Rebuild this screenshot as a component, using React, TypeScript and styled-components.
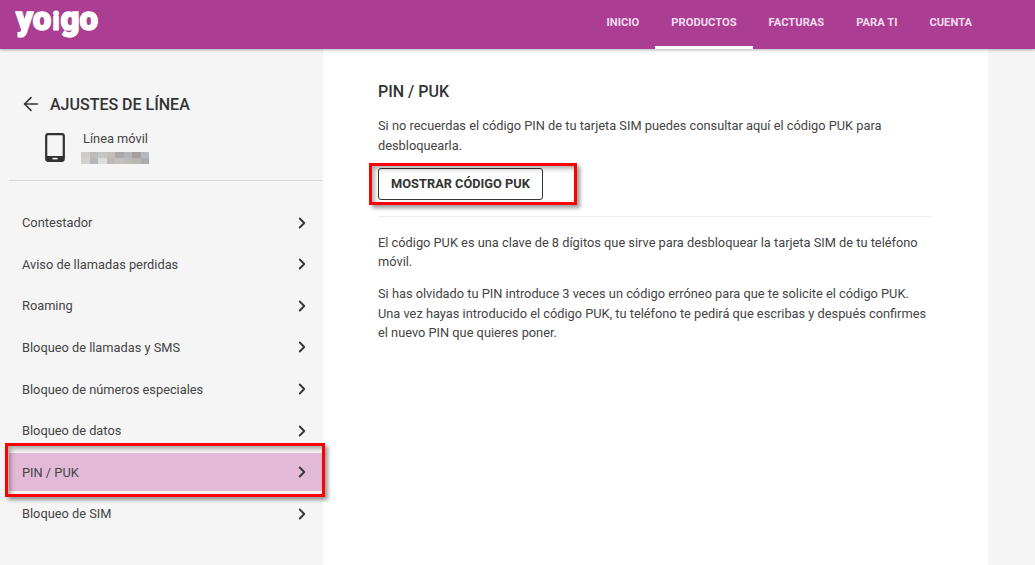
import React from "react";
import styled, { createGlobalStyle } from "styled-components";
import { ArrowLeft, ChevronRight } from "lucide-react";

const navItems = ["INICIO", "PRODUCTOS", "FACTURAS", "PARA TI", "CUENTA"];

const menuItems = [
  "Contestador",
  "Aviso de llamadas perdidas",
  "Roaming",
  "Bloqueo de llamadas y SMS",
  "Bloqueo de números especiales",
  "Bloqueo de datos",
  "PIN / PUK",
  "Bloqueo de SIM",
];

const mosaic = [
  "#cfcbc7", "#bcbcbc", "#c6c6c6", "#c2c0bc", "#a9a7a7", "#b3b5b8", "#a39f9c", "#b7babc",
  "#d2d0cc", "#b5b8ba", "#dcdedb", "#bdb9b6", "#c2c0be", "#bebcb9", "#b9b5b0", "#a9adb1",
];

const GlobalStyle = createGlobalStyle`
  html, body {
    margin: 0;
    height: 100%;
    overflow: hidden;
    background: #f5f5f5;
    font-family: Roboto, "Liberation Sans", sans-serif;
    color: #333;
  }
`;

function App() {
  return (
    <Page>
      <GlobalStyle />
      <Header>
        <Logo>
          yo<LogoI>i</LogoI>go
        </Logo>
        <Nav>
          {navItems.map((item) => (
            <NavItem key={item} $active={item === "PRODUCTOS"}>
              {item}
            </NavItem>
          ))}
        </Nav>
      </Header>
      <Body>
        <Sidebar>
          <SideHead>
            <BackRow>
              <ArrowLeft size={22} strokeWidth={1.7} color="#333" />
              <SideTitle>AJUSTES DE LÍNEA</SideTitle>
            </BackRow>
            <LineRow>
              <svg width="20" height="30" viewBox="0 0 20 30">
                <rect x="1.2" y="1.2" width="17.6" height="26.6" rx="2" fill="none" stroke="#333" strokeWidth="2.2" />
                <rect x="1" y="23" width="18" height="5" fill="#333" />
                <rect x="7.5" y="24.8" width="5" height="1.6" fill="#f5f5f5" />
              </svg>
              <LineText>
                <LineName>Línea móvil</LineName>
                <Mosaic>
                  {mosaic.map((c, i) => (
                    <MosaicCell key={i} $color={c} />
                  ))}
                </Mosaic>
              </LineText>
            </LineRow>
          </SideHead>
          <Menu>
            {menuItems.map((item) => (
              <MenuRow key={item} $active={item === "PIN / PUK"}>
                {item}
                <ChevronRight size={18} strokeWidth={2.4} color="#333" />
                {item === "PIN / PUK" && <RowMark />}
              </MenuRow>
            ))}
          </Menu>
        </Sidebar>
        <Main>
          <Title>PIN / PUK</Title>
          <Text>
            Si no recuerdas el código PIN de tu tarjeta SIM puedes consultar aquí el código PUK para
            desbloquearla.
          </Text>
          <ButtonWrap>
            <Button>MOSTRAR CÓDIGO PUK</Button>
            <ButtonMark />
          </ButtonWrap>
          <Rule />
          <Text>
            El código PUK es una clave de 8 dígitos que sirve para desbloquear la tarjeta SIM de tu
            teléfono móvil.
          </Text>
          <Text>
            Si has olvidado tu PIN introduce 3 veces un código erróneo para que te solicite el código
            PUK. Una vez hayas introducido el código PUK, tu teléfono te pedirá que escribas y después
            confirmes el nuevo PIN que quieres poner.
          </Text>
        </Main>
      </Body>
    </Page>
  );
}

const Page = styled.div`
  width: 1035px;
  height: 565px;
  display: flex;
  flex-direction: column;
  overflow: hidden;
`;

const Header = styled.header`
  height: 49px;
  flex: none;
  display: flex;
  justify-content: space-between;
  background: #ab3e92;
  box-shadow: 0 1px 3px rgba(0, 0, 0, 0.3);
  position: relative;
  z-index: 2;
`;

const Logo = styled.div`
  margin-left: 16px;
  font-family: Roboto, sans-serif;
  font-size: 33px;
  font-weight: 900;
  line-height: 37px;
  color: #fff;
  -webkit-text-stroke: 1.4px #fff;
`;

const LogoI = styled.span`
  font-size: 26px;
  margin: 0 1px;
  -webkit-text-stroke: 1.2px #fff;
`;

const Nav = styled.nav`
  display: flex;
  margin-right: 47px;
`;

const NavItem = styled.a<{ $active?: boolean }>`
  height: 49px;
  box-sizing: border-box;
  padding: 16px 16px 0;
  font-size: 11.2px;
  line-height: 14px;
  font-weight: 700;
  color: #f3dcee;
  border-bottom: 3px solid ${(p) => (p.$active ? "#fff" : "transparent")};
`;

const Body = styled.div`
  flex: 1;
  display: flex;
  min-height: 0;
`;

const Sidebar = styled.aside`
  width: 323px;
  flex: none;
  background: #f5f5f5;
`;

const SideHead = styled.div`
  height: 132px;
  box-sizing: border-box;
  margin-left: 9px;
  padding: 44px 0 0 11px;
  border-bottom: 1px solid #d9d9d9;
`;

const BackRow = styled.div`
  display: flex;
  align-items: center;
  gap: 8px;
  height: 22px;
`;

const SideTitle = styled.h2`
  margin: 0;
  font-size: 16px;
  font-weight: 500;
  color: #333;
`;

const LineRow = styled.div`
  display: flex;
  align-items: center;
  gap: 16px;
  margin: 16px 0 0 25px;
`;

const LineText = styled.div`
  display: flex;
  flex-direction: column;
  gap: 5px;
`;

const LineName = styled.span`
  margin-left: 2px;
  font-size: 12.8px;
  line-height: 16px;
  color: #444;
`;

const Mosaic = styled.div`
  display: grid;
  grid-template-columns: repeat(8, 8.5px);
  grid-auto-rows: 6px;
`;

const MosaicCell = styled.i<{ $color: string }>`
  background: ${(p) => p.$color};
`;

const Menu = styled.div`
  margin: 22.7px 0 0 9px;
  display: flex;
  flex-direction: column;
`;

const MenuRow = styled.div<{ $active?: boolean }>`
  position: relative;
  height: 38px;
  margin-bottom: 3.6px;
  padding: 0 12px 0 13px;
  display: flex;
  align-items: center;
  justify-content: space-between;
  font-size: 12.8px;
  color: #444;
  background: ${(p) => (p.$active ? "#e2b9d7" : "transparent")};
`;

const markStyle = `
  position: absolute;
  box-sizing: border-box;
  border: 3px solid #f00;
  box-shadow: 3px 3px 4px rgba(0, 0, 0, 0.4), inset 3px 3px 4px rgba(0, 0, 0, 0.3);
  pointer-events: none;
`;

const RowMark = styled.span`
  ${markStyle}
  left: -4px;
  right: -2px;
  top: -10px;
  bottom: -6px;
`;

const Main = styled.main`
  width: 665px;
  flex: none;
  box-sizing: border-box;
  padding: 33px 56px 0 55px;
  background: #fff;
`;

const Title = styled.h1`
  margin: 0 0 14px;
  font-size: 16px;
  line-height: 20px;
  font-weight: 500;
  color: #333;
`;

const Text = styled.p`
  margin: 0 0 12px;
  font-size: 12.8px;
  line-height: 19.6px;
  color: #444;
`;

const ButtonWrap = styled.div`
  position: relative;
  width: 165px;
  margin-top: 12.6px;
`;

const Button = styled.button`
  display: block;
  width: 165px;
  height: 32px;
  padding: 0;
  background: #fff;
  border: 1px solid #333;
  border-radius: 3px;
  font-family: inherit;
  font-size: 12.8px;
  font-weight: 700;
  color: #333;
`;

const ButtonMark = styled.span`
  ${markStyle}
  left: -9px;
  top: -5px;
  width: 208px;
  height: 42px;
`;

const Rule = styled.hr`
  margin: 16px 0 16px;
  border: 0;
  border-top: 1px solid #eee;
`;

export default App;
